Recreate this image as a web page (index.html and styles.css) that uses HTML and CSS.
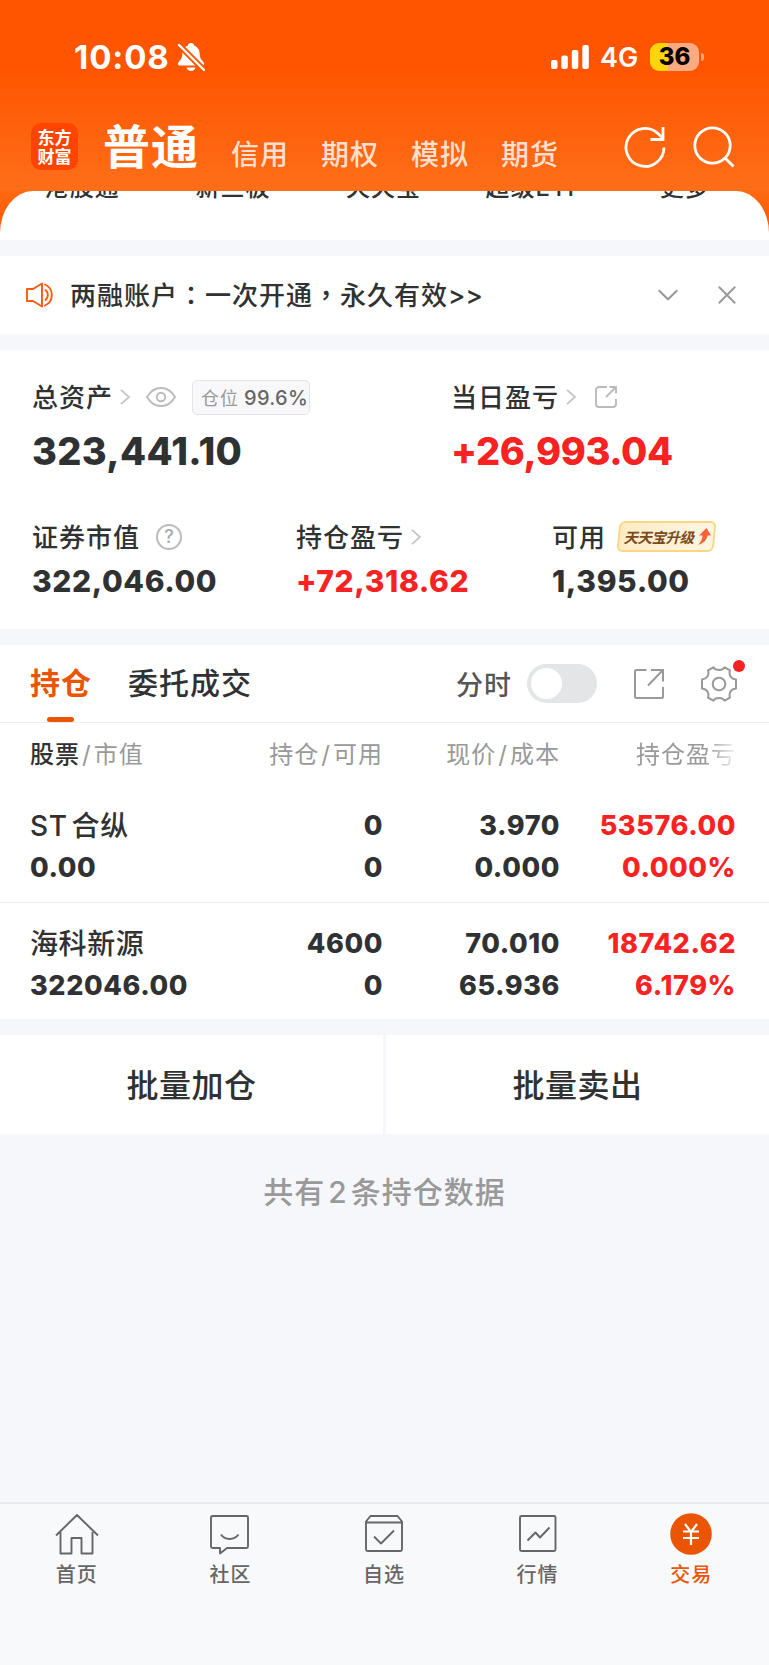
FILE: index.html
```html
<!DOCTYPE html>
<html lang="zh-CN">
<head>
    <meta charset="UTF-8">
    <meta name="viewport" content="width=device-width, initial-scale=1.0">
    <title>交易</title>
    <link rel="stylesheet" href="styles.css">
</head>
<body>

    <header>
        <div class="status-bar">
            <span class="time">10:08</span>
            <svg class="bell" width="28" height="30" viewBox="0 0 28 30">
                <path fill="#fff" d="M14 1c-2 0-3 1.2-3.300 2.700C7 5 5.500 8 5.300 12 5.200 16 4 17.500 2 19.500c-2 2.500-1 4 1 4h22c2 0 3-1.500 1-4-2-2-3.200-3.500-3.300-7.500C22.500 8 21 5 17.300 3.700 17 2.200 16 1 14 1zM9.500 25.500h9c-.5 2-2.200 3.500-4.500 3.500s-4-1.500-4.500-3.500z"/>
                <path stroke="#ff5500" stroke-width="6" d="M1 2l26 26"/>
                <path stroke="#fff" stroke-width="2.400" stroke-linecap="round" d="M2 3l25 25"/>
            </svg>
            <svg class="signal" width="38" height="24" viewBox="0 0 38 24" fill="#fff">
                <rect x="0" y="15" width="6.500" height="9" rx="2"/>
                <rect x="10.300" y="10.500" width="6.500" height="13.500" rx="2"/>
                <rect x="20.800" y="5" width="6.500" height="19" rx="2"/>
                <rect x="31.300" y="0" width="6.500" height="24" rx="2"/>
            </svg>
            <span class="network">4G</span>
            <span class="battery">36</span>
            <span class="battery-cap"></span>
        </div>
        <nav class="account-nav">
            <div class="logo">东方<br>财富</div>
            <a class="current">普通</a>
            <a>信用</a>
            <a>期权</a>
            <a>模拟</a>
            <a>期货</a>
            <svg class="refresh" width="42" height="42" viewBox="0 0 42 42" fill="none" stroke="#fff" stroke-width="2.800">
                <path d="M40 21.500A19 19 0 1 1 34.500 8L39 12.500"/>
                <path d="M39 1v12.500H26.500"/>
            </svg>
            <svg class="search" width="42" height="42" viewBox="0 0 42 42" fill="none" stroke="#fff" stroke-width="2.800">
                <circle cx="19.500" cy="19.500" r="17.700"/>
                <path d="M32 32l8.500 8.500"/>
            </svg>
        </nav>
    </header>

    <div class="shortcuts-wrap">
        <div class="shortcuts">
            <span>港股通</span>
            <span>新三板</span>
            <span>天天宝</span>
            <span>超级ETF</span>
            <span>更多</span>
        </div>
    </div>

    <div class="notice">
        <svg width="28" height="26" viewBox="0 0 28 26" fill="none" stroke="#ff5a0a" stroke-width="1.900" stroke-linejoin="round" stroke-linecap="round">
            <path d="M1 7h6l9-5.500v23L7 19H1z"/>
            <path d="M19.500 8a6.500 6.500 0 0 1 0 10M19 2.500a11.500 11.500 0 0 1 0 21"/>
        </svg>
        <p>两融账户<span lang="zh-TW">：</span>一次开通<span lang="zh-TW">，</span>永久有效<span class="more">&gt;&gt;</span></p>
        <svg class="fold" width="20" height="12" viewBox="0 0 20 12" fill="none" stroke="#999" stroke-width="2">
            <path d="M.7 1.200L10 10.300l9.300-9.100"/>
        </svg>
        <svg class="close" width="18" height="18" viewBox="0 0 18 18" fill="none" stroke="#999" stroke-width="2">
            <path d="M.8.8l16.400 16.400M17.200.8L.8 17.200"/>
        </svg>
    </div>

    <section class="assets">
        <div class="summary">
            <div class="item">
                <div class="label">
                    <span>总资产</span>
                    <svg class="arrow" width="10" height="16" viewBox="0 0 10 16"><path d="M1 .8L9 8l-8 7.200"/></svg>
                    <svg class="eye" width="30" height="20" viewBox="0 0 30 20" fill="none" stroke="#bbb" stroke-width="1.900">
                        <path d="M1 10C4.500 4 9 1 15 1s10.500 3 14 9c-3.500 6-8 9-14 9S4.500 16 1 10z"/>
                        <circle cx="15" cy="10" r="4.200"/>
                    </svg>
                    <div class="ratio">仓位<b>99.6%</b></div>
                </div>
                <div class="value">323,441.10</div>
            </div>
            <div class="item">
                <div class="label">
                    <span>当日盈亏</span>
                    <svg class="arrow" width="10" height="16" viewBox="0 0 10 16"><path d="M1 .8L9 8l-8 7.200"/></svg>
                    <svg class="share" width="22" height="22" viewBox="0 0 22 22" fill="none" stroke="#bbb" stroke-width="1.900">
                        <path d="M12 1H4a3 3 0 0 0-3 3v14a3 3 0 0 0 3 3h14a3 3 0 0 0 3-3v-5M14.500 1H21v6.500M21 1L11 11"/>
                    </svg>
                </div>
                <div class="value red">+26,993.04</div>
            </div>
        </div>
        <div class="details">
            <div class="item">
                <div class="label">
                    <span>证券市值</span>
                    <div class="help">?</div>
                </div>
                <div class="value">322,046.00</div>
            </div>
            <div class="item">
                <div class="label">
                    <span>持仓盈亏</span>
                    <svg class="arrow" width="10" height="16" viewBox="0 0 10 16"><path d="M1 .8L9 8l-8 7.200"/></svg>
                </div>
                <div class="value red">+72,318.62</div>
            </div>
            <div class="item">
                <div class="label">
                    <span>可用</span>
                    <div class="upgrade">
                        <em>天天宝升级</em>
                        <svg width="13" height="17" viewBox="0 0 13 17"><path fill="#fb6237" d="M7.500 0L13 7.500H9.500C9 12 6 15.500 1 17c2.500-3 3.500-6 3.500-9.500H1z"/></svg>
                    </div>
                </div>
                <div class="value">1,395.00</div>
            </div>
        </div>
    </section>

    <section class="positions">
        <div class="tabs">
            <a class="tab active">持仓</a>
            <a class="tab">委托成交</a>
            <span class="minute">分时</span>
            <span class="switch"></span>
            <svg class="export" width="30" height="30" viewBox="0 0 30 30" fill="none" stroke="#999" stroke-width="2">
                <path d="M12.500 1H2.500A1.500 1.500 0 0 0 1 2.500v25A1.500 1.500 0 0 0 2.500 29h25a1.500 1.500 0 0 0 1.500-1.500V18M17 1h12v11.500M29 1L14 16.500"/>
            </svg>
            <span class="settings">
                <svg width="36" height="36" viewBox="0 0 36 36" fill="none" stroke="#999" stroke-width="2" stroke-linejoin="round">
                    <path d="M12.300 1.300C14.500 5 21.500 5 23.700 1.300L29 4.300C27.500 9 30 13 35 13.500v9c-5 .5-7.500 4.500-6 9.200l-5.300 3C21.500 31 14.500 31 12.300 34.700L7 31.700C8.500 27 6 23 1 22.500v-9C6 13 8.500 9 7 4.300z"/>
                    <circle cx="18" cy="18" r="6.300"/>
                </svg>
            </span>
        </div>

        <div class="row head">
            <div><b>股票</b><i>/</i>市值</div>
            <div>持仓<i>/</i>可用</div>
            <div>现价<i>/</i>成本</div>
            <div class="fade">持仓盈亏</div>
        </div>
        <div class="row">
            <div><span class="name"><span class="st">ST</span>合纵</span><span>0.00</span></div>
            <div><span>0</span><span>0</span></div>
            <div><span>3.970</span><span>0.000</span></div>
            <div class="red"><span>53576.00</span><span>0.000%</span></div>
        </div>
        <div class="row">
            <div><span class="name">海科新源</span><span>322046.00</span></div>
            <div><span>4600</span><span>0</span></div>
            <div><span>70.010</span><span>65.936</span></div>
            <div class="red"><span>18742.62</span><span>6.179%</span></div>
        </div>
    </section>

    <div class="batch">
        <button>批量加仓</button>
        <button>批量卖出</button>
    </div>

    <p class="total">共有<span>2</span>条持仓数据</p>

    <nav class="tab-bar">
        <a>
            <svg width="46" height="42" viewBox="0 0 46 42">
                <path d="M2 22.500L23 2l21 20.500M6.500 19v21.500h11V25h10v15.500h11V19"/>
            </svg>
            首页
        </a>
        <a>
            <svg width="46" height="42" viewBox="0 0 46 42">
                <path d="M5.500 3h34a1.500 1.500 0 0 1 1.500 1.500v29a1.500 1.500 0 0 1-1.500 1.500H20l-7 5.500V35H5.500A1.500 1.500 0 0 1 4 33.500v-29A1.500 1.500 0 0 1 5.500 3zM14 21.500c4 6 13 6 17.500 0"/>
            </svg>
            社区
        </a>
        <a>
            <svg width="46" height="42" viewBox="0 0 46 42">
                <path d="M9.500 3h27l4.500 5.500v28a1.500 1.500 0 0 1-1.500 1.500h-33A1.500 1.500 0 0 1 5 36.500v-28zM5.500 9.500h35M13 23.500l7 7L33 17.500"/>
            </svg>
            自选
        </a>
        <a>
            <svg width="46" height="42" viewBox="0 0 46 42">
                <rect x="5" y="3" width="35.500" height="35" rx="1.500"/>
                <path d="M12.500 27.500l8-8 4.500 5 9.500-10"/>
            </svg>
            行情
        </a>
        <a class="current">
            <svg width="46" height="42" viewBox="0 0 46 42">
                <circle cx="23" cy="21" r="20.800"/>
                <path d="M17 11l6 8 6-8M23 19v13M15 18.500h16M15 25h16"/>
            </svg>
            交易
        </a>
    </nav>

</body>
</html>
```
FILE: styles.css
```css
* {
    box-sizing: border-box;
}

body {
    margin: 0;
    width: 769px;
    height: 1665px;
    overflow: hidden;
    display: flex;
    flex-direction: column;
    background-color: #f6f7fa;
    color: #303132;
    font-family: Inter, "Noto Sans CJK SC", sans-serif;
    font-size: 26px;
    font-weight: 500;
}

svg {
    flex: none;
    display: block;
}

p {
    margin: 0;
}

b, em, i {
    font-weight: inherit;
    font-style: normal;
}

.red {
    color: #f82222;
}

/* header */

header {
    height: 191px;
    background: linear-gradient(#ff5500 70px, #ff6d18 185px);
    color: #fff;
}

.status-bar {
    height: 114px;
    padding: 0 65px 0 74px;
    display: flex;
    align-items: center;
}

.time {
    font-size: 33px;
    font-weight: 700;
    letter-spacing: 0.9px;
    width: 103px;
}

.signal {
    margin-left: auto;
}

.network {
    margin-left: 11px;
    font-size: 27px;
    font-weight: 600;
    width: 50px;
}

.battery {
    width: 49px;
    height: 28px;
    border-radius: 9px;
    background: linear-gradient(90deg, #ffd60a 18px, #ffaa80 18px);
    color: #000;
    font-size: 24px;
    font-weight: 800;
    line-height: 28px;
    text-align: center;
}

.battery-cap {
    width: 3px;
    height: 8px;
    margin-left: 2px;
    border-radius: 0 3px 3px 0;
    background-color: #ffaa80;
}

.account-nav {
    height: 77px;
    padding: 0 34px 0 31px;
    display: flex;
    align-items: flex-start;
}

.account-nav a {
    width: 90px;
    margin-top: 20px;
    font-size: 28px;
    letter-spacing: 1px;
    line-height: 42px;
    color: #ffdfcd;
}

.account-nav a.current {
    width: 128px;
    margin: -2px 0 0 25px;
    font-size: 47px;
    line-height: 70px;
    color: #fff;
    font-weight: 700;
}

.logo {
    width: 47px;
    height: 47px;
    margin-top: 9px;
    padding-top: 4px;
    border-radius: 10px;
    background-color: #ff4400;
    font-family: "Noto Sans CJK SC", sans-serif;
    font-size: 17px;
    font-weight: 700;
    line-height: 19px;
    text-align: center;
}

.refresh {
    margin: 12px 27px 0 auto;
}

.search {
    margin-top: 12px;
}

/* shortcut grid, scrolled up under the header */

.shortcuts-wrap {
    height: 49px;
    background: linear-gradient(#ff6812, #ff5500);
}

.shortcuts {
    height: 49px;
    padding: 0 9px 0 7px;
    border-radius: 33px 33px 0 0 / 42px 42px 0 0;
    background-color: #fff;
    overflow: hidden;
    display: grid;
    grid-template-columns: repeat(5, 1fr);
    text-align: center;
    font-size: 24px;
    letter-spacing: 1px;
    line-height: 36px;
}

.shortcuts span {
    margin-top: -21px;
}

/* notice */

.notice {
    height: 78px;
    margin: 16px 0;
    padding: 0 33px 0 26px;
    display: flex;
    align-items: center;
    background-color: #fff;
}

.notice p {
    margin: -3px 0 0 16px;
    flex: 1;
    font-family: "Noto Sans CJK SC", sans-serif;
    letter-spacing: 1px;
}

.notice p [lang] {
    font-family: "Noto Sans CJK TC", sans-serif;
}

.notice .more {
    font-family: Inter, sans-serif;
    letter-spacing: 0;
}

.notice .close {
    margin-left: 40px;
}

/* assets */

.assets {
    height: 279px;
    padding: 27px 0 0 32px;
    background-color: #fff;
}

.summary {
    display: grid;
    grid-template-columns: 419px 1fr;
    height: 140px;
}

.details {
    display: grid;
    grid-template-columns: 264px 256px 1fr;
}

.label {
    height: 40px;
    display: flex;
    align-items: center;
    letter-spacing: 1px;
}

.label > span {
    margin-top: -3px;
}

.arrow {
    margin-left: 7px;
    fill: none;
    stroke: #c4c4c4;
    stroke-width: 1.8;
}

.eye {
    margin-left: 16px;
}

.share {
    margin-left: 19px;
}

.ratio {
    width: 118px;
    height: 35px;
    margin-left: 16px;
    padding-left: 8px;
    border: 1px solid #e3e4e8;
    border-radius: 5px;
    background-color: #f8f8fa;
    color: #999;
    font-size: 18px;
    font-weight: 400;
    line-height: 34px;
    white-space: nowrap;
}

.ratio b {
    margin-left: 5px;
    color: #666;
    font-size: 20px;
    font-weight: 500;
    letter-spacing: 0.3px;
}

.summary .value {
    margin-top: 11px;
    font-size: 38px;
    font-weight: 800;
    letter-spacing: 0.3px;
    line-height: 46px;
}

.summary .value.red {
    letter-spacing: -0.4px;
}

.details .value {
    margin-top: 5px;
    font-size: 30px;
    font-weight: 800;
    letter-spacing: 0.6px;
    line-height: 38px;
}

.help {
    width: 26px;
    height: 26px;
    margin-left: 16px;
    border: 2px solid #bbb;
    border-radius: 50%;
    color: #aaa;
    font-size: 18px;
    line-height: 22px;
    text-align: center;
    letter-spacing: 0;
}

.upgrade {
    width: 97px;
    height: 31px;
    margin: -2px 0 0 12px;
    padding-left: 5px;
    display: flex;
    align-items: center;
    gap: 3px;
    border: 2px solid #fcd681;
    border-radius: 6px;
    background: linear-gradient(90deg, #fdebc6, #fff6e2);
    transform: skewX(-6deg);
    color: #7a4a20;
    font-size: 14.5px;
    letter-spacing: -0.5px;
    white-space: nowrap;
}

.upgrade em {
    font-weight: 700;
    transform: skewX(-8deg);
}

/* positions */

.positions {
    height: 374px;
    margin-top: 16px;
    background-color: #fff;
}

.tabs {
    height: 78px;
    padding: 0 32px 0 30px;
    display: flex;
    align-items: center;
    border-bottom: 1px solid #f0f0f2;
}

.tab {
    position: relative;
    font-size: 30px;
    letter-spacing: 1px;
    line-height: 77px;
    margin-right: 36px;
}

.tab.active {
    color: #ea5504;
    font-weight: 700;
}

.tab.active::after {
    content: "";
    position: absolute;
    left: 17px;
    bottom: 0;
    width: 27px;
    height: 5px;
    border-radius: 3px;
    background-color: #ea5504;
}

.minute {
    margin-left: auto;
    color: #555;
    font-size: 27px;
    letter-spacing: 1px;
}

.switch {
    width: 70px;
    height: 39px;
    margin-left: 15px;
    padding: 4px;
    border-radius: 20px;
    background-color: #e4e5e7;
}

.switch::before {
    content: "";
    display: block;
    width: 31px;
    height: 31px;
    border-radius: 50%;
    background-color: #fff;
}

.export {
    margin-left: 37px;
}

.settings {
    position: relative;
    margin-left: 37px;
}

.settings::after {
    content: "";
    position: absolute;
    right: -8px;
    top: -6px;
    width: 12px;
    height: 12px;
    border-radius: 50%;
    background-color: #f82222;
}

.row {
    height: 117px;
    padding: 20px 33px 0 30px;
    display: grid;
    grid-template-columns: 181px 172px 177px 176px;
    font-weight: 800;
    font-size: 27px;
    letter-spacing: 0.6px;
    line-height: 42px;
}

.row + .row:last-child {
    border-top: 1px solid #f0f0f2;
}

.row > div {
    text-align: right;
    white-space: nowrap;
}

.row > div:first-child {
    text-align: left;
}

.row > div > span {
    display: block;
}

.row .name {
    font-weight: 500;
    font-size: 28px;
    letter-spacing: 0.6px;
}

.st {
    margin-right: 4px;
}

.row.head {
    height: 62px;
    padding-top: 14px;
    color: #999;
    font-size: 24px;
    font-weight: 400;
    letter-spacing: 1px;
    line-height: 36px;
}

.head b {
    color: #303132;
    font-weight: 500;
}

.head i {
    margin: 0 2px;
}

.fade {
    -webkit-mask-image: linear-gradient(90deg, #000 146px, transparent 180px);
    mask-image: linear-gradient(90deg, #000 146px, transparent 180px);
}

/* batch buttons */

.batch {
    height: 99px;
    margin-top: 16px;
    display: grid;
    grid-template-columns: 383px 1fr;
    gap: 3px;
}

.batch button {
    border: 0;
    padding: 0 0 3px;
    background-color: #fff;
    color: #303132;
    font: inherit;
    font-size: 32px;
    letter-spacing: 0.5px;
}

.total {
    margin-top: 35px;
    color: #999;
    font-size: 30px;
    letter-spacing: 1px;
    line-height: 46px;
    text-align: center;
}

.total span {
    margin: 0 3px;
}

/* bottom tab bar */

.tab-bar {
    height: 163px;
    margin-top: auto;
    padding: 9px 1px 0 0;
    border-top: 2px solid #e9eaec;
    display: grid;
    grid-template-columns: repeat(5, 1fr);
    background-color: #f8f9fb;
}

.tab-bar a {
    display: flex;
    flex-direction: column;
    align-items: center;
    color: #666;
    font-size: 20px;
    letter-spacing: 1px;
    line-height: 40px;
}

.tab-bar svg {
    fill: none;
    stroke: #666;
    stroke-width: 1.9;
    stroke-linejoin: round;
}

.tab-bar .current {
    color: #ea5504;
}

.tab-bar .current svg {
    stroke: #fff;
    stroke-width: 2.2;
}

.tab-bar circle {
    fill: #ea5504;
    stroke: none;
}
```
